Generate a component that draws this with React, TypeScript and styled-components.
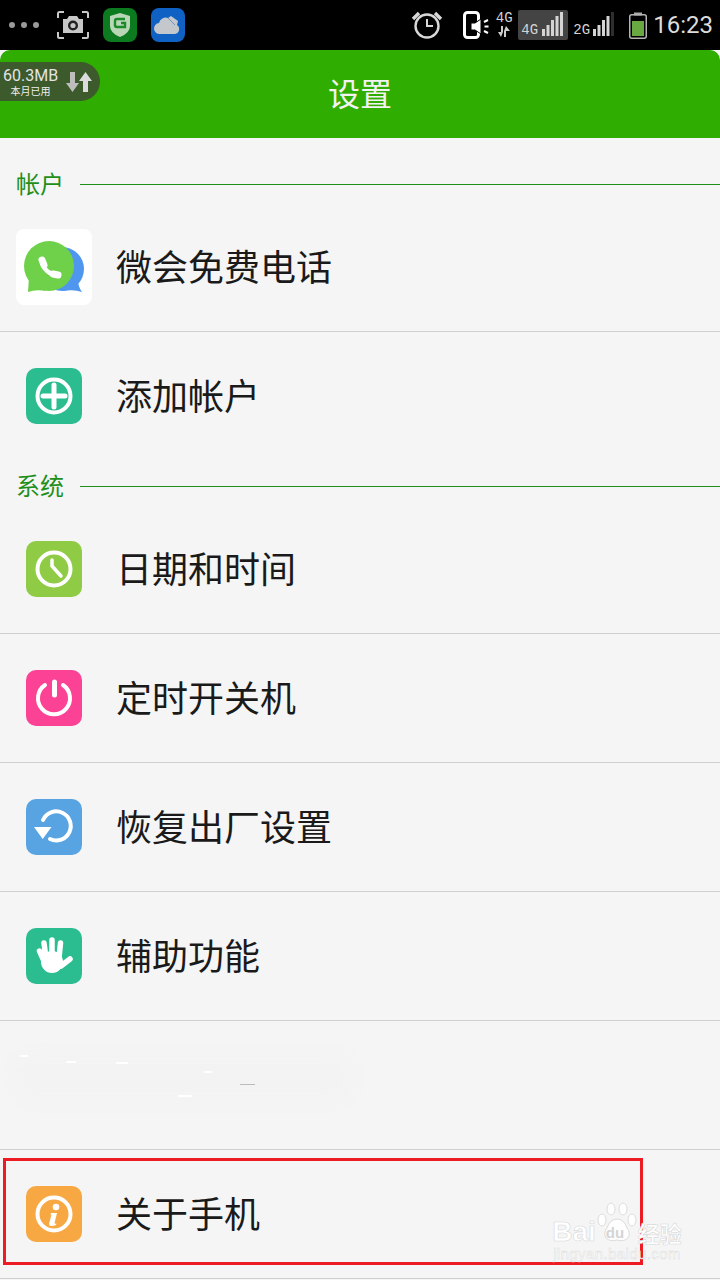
import styled, { createGlobalStyle } from "styled-components";
import type { ReactNode } from "react";

const CJK = `"Noto Sans CJK SC", "Noto Sans", sans-serif`;

const flecks = [
  { x: 20, y: 34, w: 8 },
  { x: 66, y: 40, w: 10 },
  { x: 116, y: 41, w: 12 },
  { x: 204, y: 50, w: 8 },
  { x: 178, y: 74, w: 14 },
];

const GlobalStyle = createGlobalStyle`
  html, body {
    margin: 0;
    padding: 0;
    background: #f5f5f5;
  }
  * {
    box-sizing: border-box;
  }
`;

function Ring() {
  return <circle cx="28" cy="28" r="16.5" fill="none" stroke="#fff" strokeWidth="4" />;
}

function Tile({ color, children }: { color: string; children: ReactNode }) {
  return (
    <IconTile $color={color}>
      <svg width="56" height="56" viewBox="0 0 56 56">
        {children}
      </svg>
    </IconTile>
  );
}

function Row({ icon, label, last }: { icon: ReactNode; label: string; last?: boolean }) {
  return (
    <RowBox $last={last}>
      <IconSlot>{icon}</IconSlot>
      <RowLabel>{label}</RowLabel>
    </RowBox>
  );
}

function BarsIcon({ lastColor = "#d4d4d4" }: { lastColor?: string }) {
  return (
    <svg width="22" height="24" viewBox="0 0 22 24">
      <rect x="0" y="17" width="3" height="7" fill="#d4d4d4" />
      <rect x="4.500" y="13" width="3" height="11" fill="#d4d4d4" />
      <rect x="9" y="8" width="3" height="16" fill="#d4d4d4" />
      <rect x="13.500" y="4" width="3" height="20" fill="#d4d4d4" />
      <rect x="18" y="0" width="3" height="24" fill={lastColor} />
    </svg>
  );
}

export default function App() {
  return (
    <Page>
      <GlobalStyle />
      <StatusBar>
        <StatusGroup>
          <Dots>
            <i />
            <i />
            <i />
          </Dots>
          <CameraSlot>
            <svg width="32" height="28" viewBox="0 0 32 28" fill="none">
              <path d="M1 7V2.5Q1 1 2.5 1H7M25 1h4.5Q31 1 31 2.5V7M1 21v4.5Q1 27 2.5 27H7M25 27h4.5q1.5 0 1.5-1.5V21" stroke="#c8c8c8" strokeWidth="2" />
              <path d="M6 8h4l2-3h8l2 3h4v14H6z" fill="#c8c8c8" />
              <circle cx="16" cy="14.5" r="5" fill="#222" />
              <circle cx="16" cy="14.5" r="2.6" fill="#c8c8c8" />
            </svg>
          </CameraSlot>
          <AppIcon $color="#0c7a1e">
            <svg width="34" height="34" viewBox="0 0 34 34">
              <path d="M17 5l10 3v10q0 7-10 11Q7 25 7 18V8z" fill="#b9d6b6" />
              <path d="M22 11h-8q-2 0-2 2v4q0 2 2 2h8v-4h-4" fill="none" stroke="#1b8a2a" strokeWidth="2.4" />
            </svg>
          </AppIcon>
          <AppIcon $color="#0f62c4">
            <svg width="34" height="34" viewBox="0 0 34 34">
              <path d="M9 26a5.5 5.5 0 0 1-1-11 7 7 0 0 1 9-5l3-2 7 5-1 4a5 5 0 0 1-2 9z" fill="#c4c8cc" />
              <path d="M17 10l7 7" stroke="#6f93c4" strokeWidth="1" />
            </svg>
          </AppIcon>
        </StatusGroup>
        <StatusGroup>
          <svg width="32" height="28" viewBox="0 0 32 28" fill="none">
            <circle cx="16" cy="15" r="11.5" stroke="#d8d8d8" strokeWidth="2.4" />
            <path d="M16 8v7h6" stroke="#d8d8d8" strokeWidth="2" />
            <path d="M2 8l6-6M30 8l-6-6" stroke="#d8d8d8" strokeWidth="3.4" />
          </svg>
          <PhoneSlot>
            <svg width="28" height="28" viewBox="0 0 28 28">
              <rect x="1.5" y="1.5" width="14" height="25" rx="3" fill="none" stroke="#fff" strokeWidth="3" />
              <path d="M8 12h4l6-4v15l-6-4H8z" fill="#fff" stroke="#000" strokeWidth="1" />
              <path d="M21 11l4-2M21.5 15.500h4M21 20l4 2" stroke="#fff" strokeWidth="2" />
            </svg>
          </PhoneSlot>
          <NetStack>
            <NetTag>4G</NetTag>
            <svg width="12" height="11" viewBox="0 0 12 11">
              <path d="M3 0v6H0l3 5 2-5V0zM8 11V5H12L8 0 6 5v6z" fill="#ccc" />
            </svg>
          </NetStack>
          <SignalBox>
            <NetTag>4G</NetTag>
            <BarsIcon />
          </SignalBox>
          <SecondSignal>
            <NetTag>2G</NetTag>
            <BarsIcon lastColor="#2e2e2e" />
          </SecondSignal>
          <BatterySlot>
            <svg width="18" height="27" viewBox="0 0 18 27">
              <rect x="5" y="0.500" width="8" height="3" fill="#aaa" />
              <rect x="0.750" y="2.750" width="16.500" height="23.500" rx="2" fill="none" stroke="#b4b4b4" strokeWidth="1.500" />
              <rect x="3" y="9" width="12" height="15" fill="#6aa842" />
            </svg>
          </BatterySlot>
          <Clock>16:23</Clock>
        </StatusGroup>
      </StatusBar>

      <Header>
        <TrafficBadge>
          <TrafficText>
            <TrafficAmount>60.3MB</TrafficAmount>
            <TrafficCaption>本月已用</TrafficCaption>
          </TrafficText>
          <svg width="28" height="22" viewBox="0 0 28 22">
            <path d="M5 1h5v11h4L7.500 21 1 12h4z" fill="#bdbdbd" />
            <path d="M18 21h5V10h4L20.500 1 14 10h4z" fill="#dcdcdc" />
          </svg>
        </TrafficBadge>
        <Title>设置</Title>
      </Header>

      <SectionHead $first>
        <SectionName>帐户</SectionName>
        <SectionRule />
      </SectionHead>
      <Row
        label="微会免费电话"
        icon={
          <LogoTile>
            <svg width="76" height="76" viewBox="0 0 76 76">
              <circle cx="46" cy="40" r="22" fill="#4f97ee" />
              <path d="M62 50q0 8 4 13-8-3-20-1z" fill="#4f97ee" />
              <circle cx="33" cy="37" r="25" fill="#6fd14a" />
              <path d="M13 48l-1 15q8-3 18-1z" fill="#6fd14a" />
              <path d="M26 33c1 7 8 13 15 13" fill="none" stroke="#fff" strokeWidth="4.500" strokeLinecap="round" />
              <path d="M26 31l2 5M37 45l5 1" fill="none" stroke="#fff" strokeWidth="7" strokeLinecap="round" />
            </svg>
          </LogoTile>
        }
      />
      <Row
        last
        label="添加帐户"
        icon={
          <Tile color="#2bbd8f">
            <Ring />
            <path d="M28 17v22M17 28h22" stroke="#fff" strokeWidth="5" strokeLinecap="round" />
          </Tile>
        }
      />

      <SectionHead>
        <SectionName>系统</SectionName>
        <SectionRule />
      </SectionHead>
      <Row
        label="日期和时间"
        icon={
          <Tile color="#8fcb45">
            <Ring />
            <path d="M26 19v6l9 10" fill="none" stroke="#fff" strokeWidth="3.500" strokeLinecap="round" />
          </Tile>
        }
      />
      <Row
        label="定时开关机"
        icon={
          <Tile color="#fb4294">
            <path d="M19 15A16 16 0 1 0 37 15" fill="none" stroke="#fff" strokeWidth="4" strokeLinecap="round" />
            <path d="M28.500 12v13" stroke="#fff" strokeWidth="5" strokeLinecap="round" />
          </Tile>
        }
      />
      <Row
        label="恢复出厂设置"
        icon={
          <Tile color="#58a4e2">
            <path d="M17 21A14.500 14.500 0 1 1 24 40" fill="none" stroke="#fff" strokeWidth="4" strokeLinecap="round" />
            <path d="M8 28h17.500l-8.800 12z" fill="#fff" />
          </Tile>
        }
      />
      <Row
        label="辅助功能"
        icon={
          <Tile color="#2bbd8f">
            <g stroke="#fff" strokeWidth="5.500" strokeLinecap="round" fill="none">
              <path d="M26 12v18M18 15l2 15M34.500 15L33 30M13.500 23l4.500 10M44 31l-9 7" />
            </g>
            <ellipse cx="26" cy="34" rx="11" ry="11" fill="#fff" />
          </Tile>
        }
      />
      <BlankRow>
        <Smudge />
        <SmudgeMark />
        {flecks.map((f) => (
          <Fleck key={f.x} style={{ left: f.x, top: f.y, width: f.w }} />
        ))}
      </BlankRow>
      <Row
        label="关于手机"
        icon={
          <Tile color="#f8a842">
            <Ring />
            <circle cx="30" cy="21" r="3.300" fill="#fff" />
            <path d="M25 27h6l-2.500 10q0 1 2 .5l-.5 1.500q-2 1-5 1-2 0-2-2l2.500-9.500-1 .5z" fill="#fff" />
          </Tile>
        }
      />

      <Highlight />
      <Watermark>
        <WatermarkTop>
          <WatermarkBrand>Bai</WatermarkBrand>
          <Paw>
            <svg width="42" height="42" viewBox="0 0 42 42" fill="rgba(255,255,255,0.9)" stroke="#dcdcdc">
              <ellipse cx="6" cy="18" rx="4" ry="6" />
              <ellipse cx="15" cy="7" rx="4" ry="6" />
              <ellipse cx="27" cy="7" rx="4" ry="6" />
              <ellipse cx="36" cy="18" rx="4" ry="6" />
              <path d="M21 17q7 0 10 9 4 5 1 10-4 4-11 2-7 2-11-2-3-5 1-10 3-9 10-9z" />
            </svg>
            <PawText>du</PawText>
          </Paw>
          <WatermarkCn>经验</WatermarkCn>
        </WatermarkTop>
        <WatermarkUrl>jingyan.baidu.com</WatermarkUrl>
      </Watermark>
    </Page>
  );
}

const Page = styled.div`
  position: relative;
  width: 720px;
  height: 1280px;
  overflow: hidden;
  background: #f5f5f5;
  font-family: ${CJK};
`;

const StatusBar = styled.div`
  display: flex;
  justify-content: space-between;
  align-items: center;
  height: 50px;
  padding: 0 7px 0 9px;
  background: #000;
`;

const StatusGroup = styled.div`
  display: flex;
  align-items: center;
`;

const Dots = styled.div`
  display: flex;
  gap: 6px;

  i {
    width: 6px;
    height: 6px;
    border-radius: 50%;
    background: #9a9a9a;
  }
`;

const CameraSlot = styled.div`
  display: flex;
  margin: 0 16px 0 18px;
`;

const AppIcon = styled.div<{ $color: string }>`
  display: flex;
  width: 34px;
  height: 34px;
  margin-right: 14px;
  margin-left: -2px;
  border-radius: 8px;
  background: ${({ $color }) => $color};

  & + & {
    margin-left: 0;
  }
`;

const PhoneSlot = styled.div`
  display: flex;
  margin: 0 4px 0 20px;
`;

const NetStack = styled.div`
  display: flex;
  flex-direction: column;
  align-items: center;
  width: 18px;
  gap: 2px;
`;

const NetTag = styled.span`
  font-family: "Liberation Mono", monospace;
  font-size: 14px;
  line-height: 11px;
  color: #d4d4d4;
`;

const SignalBox = styled.div`
  display: flex;
  align-items: flex-end;
  gap: 4px;
  width: 50px;
  height: 30px;
  margin-left: 5px;
  padding: 0 0 4px 3px;
  background: #444;
  border-radius: 2px;
`;

const SecondSignal = styled.div`
  display: flex;
  align-items: flex-end;
  gap: 3px;
  height: 30px;
  width: 42px;
  margin-left: 5px;
  padding-bottom: 4px;
`;

const BatterySlot = styled.div`
  display: flex;
  margin: 0 6px 0 14px;
`;

const Clock = styled.span`
  font-family: Roboto, sans-serif;
  font-size: 24px;
  color: #dcdcdc;
`;

const Header = styled.header`
  position: relative;
  display: flex;
  justify-content: center;
  align-items: center;
  height: 88px;
  background: #2fad00;
  border-radius: 10px 10px 0 0;
`;

const Title = styled.h1`
  margin: 0 0 4px;
  font-size: 32px;
  font-weight: 400;
  color: #f2f2f2;
`;

const TrafficBadge = styled.div`
  position: absolute;
  left: 0;
  top: 12px;
  display: flex;
  align-items: center;
  gap: 7px;
  width: 100px;
  height: 39px;
  padding-left: 3px;
  background: #3c5a2b;
  border-radius: 0 20px 20px 0;
`;

const TrafficText = styled.div`
  display: flex;
  flex-direction: column;
  align-items: center;
`;

const TrafficAmount = styled.span`
  font-family: Roboto, sans-serif;
  font-size: 16px;
  line-height: 18px;
  color: #e4e4e4;
`;

const TrafficCaption = styled.span`
  font-size: 10px;
  line-height: 12px;
  color: #f0f0f0;
`;

const SectionHead = styled.div<{ $first?: boolean }>`
  display: flex;
  align-items: center;
  gap: 16px;
  height: 44px;
  margin-top: ${({ $first }) => ($first ? "21px" : "0")};
  padding: 6px 0 0 16px;
`;

const SectionName = styled.span`
  font-size: 24px;
  line-height: 32px;
  margin-bottom: 2px;
  color: #1f8f1a;
`;

const SectionRule = styled.div`
  flex: 1;
  height: 1px;
  background: #1f8f1a;
`;

const RowBox = styled.div<{ $last?: boolean }>`
  display: flex;
  align-items: center;
  gap: 24px;
  height: 129px;
  padding-left: 16px;
  border-bottom: 1px solid ${({ $last }) => ($last ? "transparent" : "#cfcfcf")};
`;

const BlankRow = styled.div`
  position: relative;
  height: 129px;
  border-bottom: 1px solid #cfcfcf;
`;

const Smudge = styled.div`
  position: absolute;
  left: 10px;
  top: 32px;
  width: 345px;
  height: 50px;
  background: #f3f3f3;
  border-radius: 24px;
  filter: blur(6px);
`;

const SmudgeMark = styled.div`
  position: absolute;
  left: 240px;
  top: 63px;
  width: 15px;
  height: 1px;
  background: #bbb;
`;

const Fleck = styled.div`
  position: absolute;
  height: 2px;
  background: #fff;
  border-radius: 1px;
`;

const IconSlot = styled.div`
  display: flex;
  justify-content: center;
  align-items: center;
  width: 76px;
  height: 76px;
`;

const IconTile = styled.div<{ $color: string }>`
  display: flex;
  width: 56px;
  height: 56px;
  border-radius: 10px;
  background: ${({ $color }) => $color};
`;

const LogoTile = styled.div`
  display: flex;
  width: 76px;
  height: 76px;
  border-radius: 8px;
  background: #fff;
`;

const RowLabel = styled.span`
  font-size: 36px;
  line-height: 48px;
  margin-bottom: 4px;
  color: #1a1a1a;
`;

const Highlight = styled.div`
  position: absolute;
  left: 3px;
  top: 1158px;
  width: 640px;
  height: 107px;
  border: 3px solid #ed1c24;
  pointer-events: none;
`;

const Watermark = styled.div`
  position: absolute;
  left: 552px;
  top: 1200px;
  width: 130px;
  display: flex;
  flex-direction: column;
  align-items: center;
  pointer-events: none;
`;

const WatermarkTop = styled.div`
  display: flex;
  align-items: flex-end;
  height: 44px;
`;

const WatermarkBrand = styled.span`
  margin-bottom: -4px;
  font-family: "Liberation Sans", sans-serif;
  font-size: 28px;
  line-height: 32px;
  font-weight: 700;
  color: #fff;
  -webkit-text-stroke: 0.6px #d8d8d8;
`;

const Paw = styled.div`
  position: relative;
  display: flex;
  width: 42px;
`;

const PawText = styled.span`
  position: absolute;
  left: 10px;
  bottom: 3px;
  font-family: "Liberation Sans", sans-serif;
  font-size: 15px;
  font-weight: 700;
  color: #d4d4d4;
`;

const WatermarkCn = styled.span`
  margin-bottom: -4px;
  font-size: 22px;
  line-height: 32px;
  font-weight: 700;
  color: #fff;
  -webkit-text-stroke: 0.6px #d8d8d8;
`;

const WatermarkUrl = styled.span`
  font-family: "Liberation Sans", sans-serif;
  font-size: 15px;
  line-height: 20px;
  letter-spacing: 0.4px;
  color: #fff;
  -webkit-text-stroke: 0.5px #dcdcdc;
`;
